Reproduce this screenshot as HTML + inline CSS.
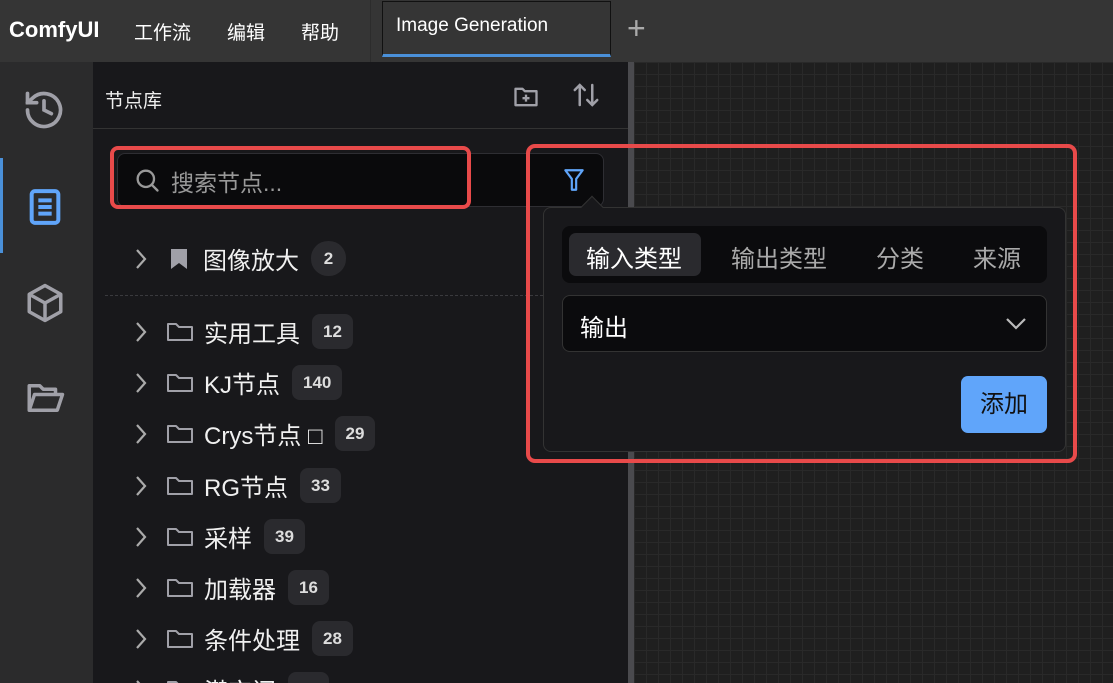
<!DOCTYPE html>
<html style="width:1113px;height:683px;overflow:hidden"><head><meta charset="utf-8"><style>
*{box-sizing:border-box;margin:0;padding:0}
body{width:1113px;height:683px;overflow:hidden;background:#222;font-family:"Liberation Sans","Noto Sans CJK SC",sans-serif;position:relative;color:#fff}
.top{position:absolute;left:0;top:0;width:1113px;height:62px;background:#353535}
.abs{position:absolute}
.canvas{position:absolute;left:634px;top:62px;width:479px;height:621px;background-color:#1f1f1f;background-image:linear-gradient(#292929 1px,transparent 1px),linear-gradient(90deg,#292929 1px,transparent 1px);background-size:12px 12px}
.side{position:absolute;left:0;top:62px;width:93px;height:621px;background:#2b2b2c}
.panel{position:absolute;left:93px;top:62px;width:535px;height:621px;background:#18181b;overflow:hidden}
.row{position:absolute;left:0;height:40px;display:flex;align-items:center;font-size:24px;color:#f0f0f0;white-space:nowrap}
.badge{background:#2a2a2e;border-radius:8px;font-size:17px;font-weight:bold;color:#ddd;padding:0 11px;height:35px;line-height:35px;margin-left:12px}
</style></head><body>
<div class="top">
 <div class="abs" style="left:9px;top:17px;font-size:22px;font-weight:bold">ComfyUI</div>
 <div class="abs" style="left:134px;top:18px;font-size:19px">工作流</div>
 <div class="abs" style="left:227px;top:18px;font-size:19px">编辑</div>
 <div class="abs" style="left:301px;top:18px;font-size:19px">帮助</div>
 <div class="abs" style="left:370px;top:0;width:1px;height:62px;background:#2c2c2c"></div>
 <div class="abs" style="left:382px;top:1px;width:229px;height:56px;border:1px solid #111;border-bottom:3px solid #4a90d9;background:#353535"></div>
 <div class="abs" style="left:396px;top:15px;font-size:19px">Image Generation</div>
 <div class="abs" style="left:627px;top:10px;font-size:32px;color:#aaa;font-weight:300">+</div>
</div>
<div class="side">
 <svg class="abs" style="left:22px;top:26px" width="44" height="44" viewBox="0 0 24 24" fill="none" stroke="#a0a0a8" stroke-width="2" stroke-linecap="round"><path d="M3 12a9 9 0 1 0 3-6.7L3 8"/><path d="M3 3v5h5"/><path d="M12 7v5l4 2"/></svg>
 <div class="abs" style="left:0;top:96px;width:3px;height:95px;background:#4a90d9"></div>
 <svg class="abs" style="left:25px;top:125px" width="40" height="40" viewBox="0 0 24 24" fill="none" stroke="#60a5fa" stroke-width="2.4"><rect x="4" y="2.5" width="16" height="19" rx="2"/><path d="M8 8h8M8 12h8M8 16h8"/></svg>
 <svg class="abs" style="left:24px;top:220px" width="42" height="42" viewBox="0 0 24 24" fill="none" stroke="#a0a0a8" stroke-width="2" stroke-linejoin="round"><path d="M12 2l9 5v10l-9 5-9-5V7z"/><path d="M3 7l9 5 9-5M12 12v10"/></svg>
 <svg class="abs" style="left:24px;top:315px" width="42" height="42" viewBox="0 0 24 24" fill="none" stroke="#a0a0a8" stroke-width="2" stroke-linejoin="round"><path d="M3 19V5h6l2 2h7v3"/><path d="M3 19l3-9h16l-3 9z"/></svg>
</div>
<div class="panel">
 <div class="abs" style="left:12px;top:24px;font-size:19px;color:#eee">节点库</div>
 <svg class="abs" style="left:419px;top:21px" width="28" height="28" viewBox="0 0 24 24" fill="none" stroke="#a0a0a8" stroke-width="2" stroke-linejoin="round"><path d="M3 19V5h6l2 2h10v12z"/><path d="M12 10v6M9 13h6"/></svg>
 <svg class="abs" style="left:478px;top:18px" width="30" height="30" viewBox="0 0 24 24" fill="none" stroke="#a0a0a8" stroke-width="2" stroke-linecap="round"><path d="M7 20V4M3 8l4-4 4 4M17 4v16M13 16l4 4 4-4"/></svg>
 <div class="abs" style="left:0;top:66px;width:535px;height:1px;background:#333"></div>
 <div class="abs" style="left:24px;top:91px;width:487px;height:54px;background:#0a0a0c;border:1px solid #2e2e33;border-radius:8px"></div>
 <svg class="abs" style="left:40px;top:104px" width="28" height="28" viewBox="0 0 24 24" fill="none" stroke="#999" stroke-width="2" stroke-linecap="round"><circle cx="11" cy="11" r="7"/><path d="M16 16l5 5"/></svg>
 <div class="abs" style="left:78px;top:102px;font-size:23px;color:#999">搜索节点...</div>
 <div class="abs" style="left:17px;top:84px;width:361px;height:63px;border:4px solid #e84a4a;border-radius:8px"></div>
 <svg class="abs" style="left:468px;top:104px" width="26" height="28" viewBox="0 0 24 24" fill="none" stroke="#60a5fa" stroke-width="2" stroke-linejoin="round"><path d="M4 3h16l-6 8v10h-4V11z"/></svg>
 <svg class="abs" style="left:38px;top:185px" width="20" height="24" viewBox="0 0 20 24" fill="none" stroke="#aaa" stroke-width="2.2"><path d="M6 3l8 9-8 9"/></svg>
 <svg class="abs" style="left:76px;top:185px" width="20" height="24" viewBox="0 0 20 24"><path d="M2 2h16v20l-8-6-8 6z" fill="#a0a0a8"/></svg>
 <div class="row" style="left:110px;top:176px">图像放大<span class="badge" style="border-radius:17px;width:35px;padding:0;text-align:center">2</span></div>
 <div class="abs" style="left:12px;top:233px;width:523px;border-top:1px dashed #3a3a3e"></div>
</div>
<div class="abs" style="left:628px;top:62px;width:6px;height:621px;background:#4a4a4e"></div>
<div class="canvas"></div>
<div id="list" style="position:absolute;left:0;top:0;width:628px;height:683px;overflow:hidden"></div>
<script>
var items=[["实用工具","12"],["KJ节点","140"],["Crys节点 □","29"],["RG节点","33"],["采样","39"],["加载器","16"],["条件处理","28"],["潜空间","18"]];
var h="";items.forEach(function(it,i){var y=Math.round(312+i*51.2);
h+='<svg class="abs" style="left:131px;top:'+(y+8)+'px" width="20" height="24" viewBox="0 0 20 24" fill="none" stroke="#aaa" stroke-width="2.2"><path d="M6 3l8 9-8 9"/></svg>';
h+='<svg class="abs" style="left:166px;top:'+(y+9)+'px" width="28" height="22" viewBox="0 0 28 22" fill="none" stroke="#a0a0a8" stroke-width="2" stroke-linejoin="round"><path d="M2 19V3h8l3 3h13v13z"/></svg>';
h+='<div class="row" style="left:204px;top:'+(y-1)+'px">'+it[0]+'<span class="badge">'+it[1]+'</span></div>';});
document.getElementById("list").innerHTML=h;
</script>
<div class="abs" style="left:543px;top:207px;width:523px;height:245px;background:#18181b;border:1px solid #333;border-radius:8px"></div>
<div class="abs" style="left:584px;top:199px;width:16px;height:16px;background:#18181b;border-left:1px solid #333;border-top:1px solid #333;transform:rotate(45deg)"></div>
<div class="abs" style="left:562px;top:226px;width:485px;height:57px;background:#0b0b0d;border-radius:8px"></div>
<div class="abs" style="left:569px;top:233px;width:132px;height:43px;background:#2a2a2e;border-radius:7px"></div>
<div class="abs" style="left:586px;top:239px;font-size:24px;color:#fff">输入类型</div>
<div class="abs" style="left:731px;top:239px;font-size:24px;color:#aaa">输出类型</div>
<div class="abs" style="left:876px;top:239px;font-size:24px;color:#aaa">分类</div>
<div class="abs" style="left:973px;top:239px;font-size:24px;color:#aaa">来源</div>
<div class="abs" style="left:562px;top:295px;width:485px;height:57px;background:#0b0b0d;border:1px solid #333;border-radius:8px"></div>
<div class="abs" style="left:580px;top:308px;font-size:24px;color:#fff">输出</div>
<svg class="abs" style="left:1003px;top:313px" width="26" height="20" viewBox="0 0 26 20" fill="none" stroke="#bbb" stroke-width="2.2"><path d="M4 6l9 9 9-9"/></svg>
<div class="abs" style="left:961px;top:376px;width:86px;height:57px;background:#60a5fa;border-radius:7px;color:#111;font-size:24px;text-align:center;line-height:57px">添加</div>
<div class="abs" style="left:526px;top:144px;width:551px;height:319px;border:4px solid #e84a4a;border-radius:9px"></div>
</body></html>
